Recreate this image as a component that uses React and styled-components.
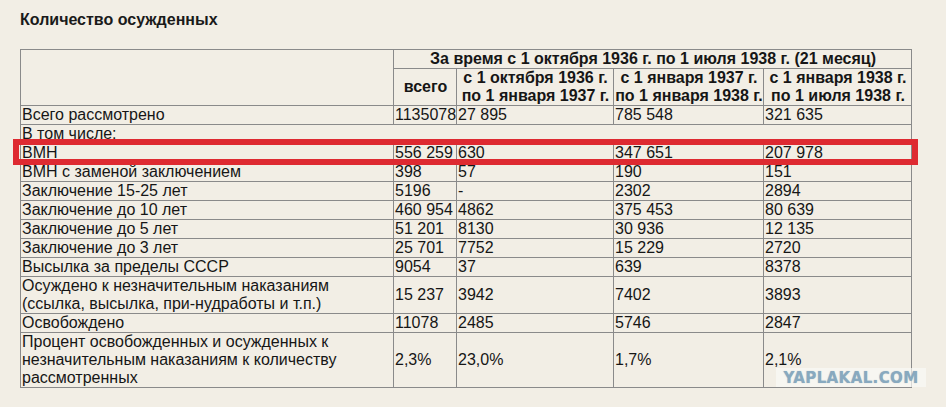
import React from 'react';
import styled, { createGlobalStyle } from 'styled-components';

const GlobalStyle = createGlobalStyle`
  html, body {
    margin: 0;
    padding: 0;
    background: #f2eee5;
  }
  body {
    font-family: "Liberation Sans", Arial, sans-serif;
    color: #111;
  }
`;

const Page = styled.div`
  position: relative;
  padding: 11px 0 0 20px;
  width: 946px;
  height: 407px;
  box-sizing: border-box;
  overflow: hidden;
`;

const Title = styled.h3`
  margin: 0 0 20px 0;
  font-size: 16px;
  line-height: 18px;
  font-weight: bold;
  color: #1a1a1a;
`;

const Table = styled.table`
  border-collapse: collapse;
  table-layout: fixed;
  width: 892px;
  font-size: 16px;
  line-height: 18px;
`;

const Cell = styled.td`
  border: 1px solid #8a8a8a;
  padding: 0 0 0 1px;
  vertical-align: middle;
  text-align: ${p => (p.center ? 'center' : 'left')};
  font-weight: ${p => (p.bold ? 'bold' : 'normal')};
  white-space: nowrap;
  overflow: visible;
  color: #161616;
`;

const Highlight = styled.div`
  position: absolute;
  left: 13px;
  top: 139px;
  width: 905px;
  height: 26px;
  box-sizing: border-box;
  border: 6px solid #de2a31;
  pointer-events: none;
`;

const Watermark = styled.div`
  position: absolute;
  left: 776px;
  top: 368px;
  width: 150px;
  height: 19px;
  background: rgba(250, 249, 246, 0.7);
  display: flex;
  align-items: center;
  justify-content: center;
  font-family: "DejaVu Sans", Verdana, sans-serif;
  font-weight: bold;
  font-size: 15px;
  letter-spacing: 0.4px;
  color: #88a9bf;
  text-shadow: 0 0 1px rgba(120, 150, 170, 0.6);
`;

const rows = [
  ['Всего рассмотрено', '1135078', '27 895', '785 548', '321 635'],
  'В том числе:',
  ['ВМН', '556 259', '630', '347 651', '207 978'],
  ['ВМН с заменой заключением', '398', '57', '190', '151'],
  ['Заключение 15-25 лет', '5196', '-', '2302', '2894'],
  ['Заключение до 10 лет', '460 954', '4862', '375 453', '80 639'],
  ['Заключение до 5 лет', '51 201', '8130', '30 936', '12 135'],
  ['Заключение до 3 лет', '25 701', '7752', '15 229', '2720'],
  ['Высылка за пределы СССР', '9054', '37', '639', '8378'],
  [['Осуждено к незначительным наказаниям', '(ссылка, высылка, при-нудработы и т.п.)'], '15 237', '3942', '7402', '3893'],
  ['Освобождено', '11078', '2485', '5746', '2847'],
  [['Процент освобожденных и осужденных к', 'незначительным наказаниям к количеству', 'рассмотренных'], '2,3%', '23,0%', '1,7%', '2,1%'],
];

const lines = (text) =>
  Array.isArray(text)
    ? text.map((t, i) => (
        <React.Fragment key={i}>
          {i > 0 && <br />}
          {t}
        </React.Fragment>
      ))
    : text;

const periods = [
  ['с 1 октября 1936 г.', 'по 1 января 1937 г.'],
  ['с 1 января 1937 г.', 'по 1 января 1938 г.'],
  ['с 1 января 1938 г.', 'по 1 июля 1938 г.'],
];

export default function App() {
  return (
    <Page>
      <GlobalStyle />
      <Title>Количество осужденных</Title>
      <Table>
        <colgroup>
          <col style={{ width: 373 }} />
          <col style={{ width: 63 }} />
          <col style={{ width: 157 }} />
          <col style={{ width: 150 }} />
          <col style={{ width: 148 }} />
        </colgroup>
        <thead>
          <tr>
            <Cell rowSpan={2} />
            <Cell colSpan={4} bold center>
              За время с 1 октября 1936 г. по 1 июля 1938 г. (21 месяц)
            </Cell>
          </tr>
          <tr>
            <Cell bold center>всего</Cell>
            {periods.map((p, i) => (
              <Cell key={i} bold center>{lines(p)}</Cell>
            ))}
          </tr>
        </thead>
        <tbody>
          {rows.map((row, i) =>
            typeof row === 'string' ? (
              <tr key={i}>
                <Cell colSpan={5}>{row}</Cell>
              </tr>
            ) : (
              <tr key={i}>
                {row.map((c, j) => (
                  <Cell key={j}>{lines(c)}</Cell>
                ))}
              </tr>
            )
          )}
        </tbody>
      </Table>
      <Highlight />
      <Watermark>YAPLAKAL.COM</Watermark>
    </Page>
  );
}
